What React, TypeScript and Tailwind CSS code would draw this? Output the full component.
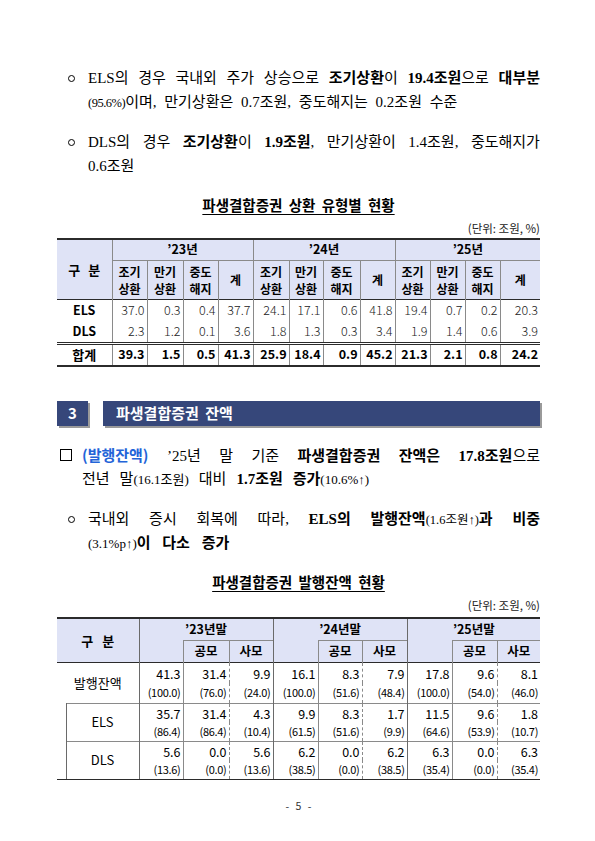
import clsx from "clsx";

const serif = "font-['Liberation_Serif','Noto_Sans_CJK_KR',serif]";
const sans = "font-['Noto_Sans_CJK_KR','Liberation_Sans',sans-serif]";

const t1Body = [
  { name: "ELS", vals: ["37.0", "0.3", "0.4", "37.7", "24.1", "17.1", "0.6", "41.8", "19.4", "0.7", "0.2", "20.3"] },
  { name: "DLS", vals: ["2.3", "1.2", "0.1", "3.6", "1.8", "1.3", "0.3", "3.4", "1.9", "1.4", "0.6", "3.9"] },
];
const t1Total = ["39.3", "1.5", "0.5", "41.3", "25.9", "18.4", "0.9", "45.2", "21.3", "2.1", "0.8", "24.2"];
const t1Cols = [
  "w-[55px]",
  "w-[35px]", "w-[36px]", "w-[35px]", "w-[35px]",
  "w-[36px]", "w-[34px]", "w-[37px]", "w-[35px]",
  "w-[35px]", "w-[35px]", "w-[35px]", "w-[40px]",
];
const subHeads = [["조기", "상환"], ["만기", "상환"], ["중도", "해지"], ["계"]];

const t2Rows = [
  {
    name: "발행잔액",
    vals: ["41.3", "31.4", "9.9", "16.1", "8.3", "7.9", "17.8", "9.6", "8.1"],
    pcts: ["(100.0)", "(76.0)", "(24.0)", "(100.0)", "(51.6)", "(48.4)", "(100.0)", "(54.0)", "(46.0)"],
  },
  {
    name: "ELS",
    vals: ["35.7", "31.4", "4.3", "9.9", "8.3", "1.7", "11.5", "9.6", "1.8"],
    pcts: ["(86.4)", "(86.4)", "(10.4)", "(61.5)", "(51.6)", "(9.9)", "(64.6)", "(53.9)", "(10.7)"],
  },
  {
    name: "DLS",
    vals: ["5.6", "0.0", "5.6", "6.2", "0.0", "6.2", "6.3", "0.0", "6.3"],
    pcts: ["(13.6)", "(0.0)", "(13.6)", "(38.5)", "(0.0)", "(38.5)", "(35.4)", "(0.0)", "(35.4)"],
  },
];
const t2Cols = [
  "w-[9px]", "w-[73px]",
  "w-[44px]", "w-[46px]", "w-[44px]",
  "w-[45px]", "w-[44px]", "w-[45px]",
  "w-[45px]", "w-[45px]", "w-[43px]",
];
// right border of each data column in table 2
const t2Right = [
  "border-r border-r-[#8a8a8a]",
  "border-r border-r-[#8a8a8a] [border-right-style:dashed]",
  "border-r border-r-[#6a6a6a]",
  "border-r border-r-[#8a8a8a]",
  "border-r border-r-[#8a8a8a] [border-right-style:dashed]",
  "border-r border-r-[#6a6a6a]",
  "border-r border-r-[#8a8a8a]",
  "border-r border-r-[#8a8a8a] [border-right-style:dashed]",
  "",
];

function Circle() {
  return (
    <div className="w-[31px] shrink-0 flex items-center">
      <span className="ml-[11px] inline-block w-[7px] h-[7px] rounded-full border border-black" />
    </div>
  );
}

function JLine({ children, className }: { children: React.ReactNode; className?: string }) {
  return <div className={clsx("flex-1 flex justify-between items-baseline", className)}>{children}</div>;
}

function Word({ children }: { children: React.ReactNode }) {
  return <span className="leading-6 whitespace-nowrap">{children}</span>;
}

function SectionHeader() {
  return (
    <div className="flex h-[25px]">
      <div className={clsx(sans, "w-[31px] bg-[#36477a] shadow-[2px_2px_0_#9a9a9a] text-white font-bold text-[15px] flex items-center justify-center")}>
        3
      </div>
      <div className={clsx(sans, "flex-1 ml-[15px] bg-[#36477a] shadow-[2px_2px_0_#9a9a9a] text-white font-bold text-[15px] flex items-center pl-[13px] [word-spacing:3px]")}>
        파생결합증권 잔액
      </div>
    </div>
  );
}

function Table1() {
  const hd = "bg-[#dfe3f6] font-bold p-0";
  return (
    <table className={clsx(sans, "w-[483px] table-fixed border-collapse text-black")}>
      <colgroup>
        {t1Cols.map((c, i) => (
          <col key={i} className={c} />
        ))}
      </colgroup>
      <thead>
        <tr className="h-[21px]">
          <th rowSpan={2} className={clsx(hd, "border-t-2 border-t-[#2b2b2b] border-r border-r-[#8a8a8a] text-[13px] [word-spacing:5px]")}>
            구 분
          </th>
          {["’23년", "’24년", "’25년"].map((y, i) => (
            <th
              key={y}
              colSpan={4}
              className={clsx(hd, "border-t-2 border-t-[#2b2b2b] border-b border-b-[#8a8a8a] text-[12.5px]", i < 2 && "border-r border-r-[#8a8a8a]")}
            >
              {y}
            </th>
          ))}
        </tr>
        <tr className="h-[39px]">
          {[0, 1, 2].flatMap((g) =>
            subHeads.map((s, j) => (
              <th
                key={`${g}-${j}`}
                className={clsx(hd, "text-[12px] leading-[17px]", !(g === 2 && j === 3) && "border-r border-r-[#8a8a8a]")}
              >
                {s.map((l) => (
                  <div key={l} className="leading-[17px]">{l}</div>
                ))}
              </th>
            ))
          )}
        </tr>
      </thead>
      <tbody>
        {t1Body.map((r, ri) => (
          <tr key={r.name} className="h-[22px]">
            <td className={clsx("p-0 text-center font-bold text-[12.5px] border-r border-r-[#8a8a8a]", ri === 0 && "border-t border-t-[#2b2b2b]")}>
              {r.name}
            </td>
            {r.vals.map((v, i) => (
              <td
                key={i}
                className={clsx("p-0 pr-[2px] text-right text-[12.5px] font-light text-[#222]", i < 11 && "border-r border-r-[#8a8a8a]", ri === 0 && "border-t border-t-[#2b2b2b]")}
              >
                {v}
              </td>
            ))}
          </tr>
        ))}
        <tr className="h-[23px]">
          <td className="p-0 text-center font-bold text-[13px] border-r border-r-[#8a8a8a] border-t-[3px] [border-top-style:double] border-t-[#2b2b2b] border-b-2 border-b-[#2b2b2b]">
            합계
          </td>
          {t1Total.map((v, i) => (
            <td
              key={i}
              className={clsx(
                "p-0 pr-[2px] text-right text-[12.5px] font-bold border-t-[3px] [border-top-style:double] border-t-[#2b2b2b] border-b-2 border-b-[#2b2b2b]",
                i < 11 && "border-r border-r-[#8a8a8a]"
              )}
            >
              {v}
            </td>
          ))}
        </tr>
      </tbody>
    </table>
  );
}

function Table2() {
  const hd = "bg-[#dfe3f6] font-bold p-0";
  return (
    <table className={clsx(sans, "w-[483px] table-fixed border-collapse text-black")}>
      <colgroup>
        {t2Cols.map((c, i) => (
          <col key={i} className={c} />
        ))}
      </colgroup>
      <thead>
        <tr className="h-[22px]">
          <th colSpan={2} rowSpan={2} className={clsx(hd, "border-t-2 border-t-[#2b2b2b] border-r border-r-[#6a6a6a] text-[13px] [word-spacing:6px]")}>
            구 분
          </th>
          {["’23년말", "’24년말", "’25년말"].map((y, i) => (
            <th key={y} colSpan={3} className={clsx(hd, "border-t-2 border-t-[#2b2b2b] text-[12.5px]", i < 2 && "border-r border-r-[#6a6a6a]")}>
              {y}
            </th>
          ))}
        </tr>
        <tr className="h-[22px]">
          {[0, 1, 2].flatMap((g) => [
            <th key={`${g}a`} className={clsx(hd, "border-r border-r-[#8a8a8a]")} />,
            <th key={`${g}b`} className={clsx(hd, "text-[12.5px] border-t border-t-[#8a8a8a] border-r border-r-[#8a8a8a]")}>
              공모
            </th>,
            <th key={`${g}c`} className={clsx(hd, "text-[12.5px] border-t border-t-[#8a8a8a]", g < 2 && "border-r border-r-[#6a6a6a]")}>
              사모
            </th>,
          ])}
        </tr>
      </thead>
      <tbody>
        {t2Rows.map((r, ri) => {
          const top = ri === 0 ? "border-t border-t-[#2b2b2b]" : "border-t border-t-[#8a8a8a]";
          const bottom = ri === 2 ? "border-b border-b-[#2b2b2b]" : "";
          const h1 = ri === 0 ? "h-[21px]" : "h-[19px]";
          const h2 = ri === 0 ? "h-[20px]" : "h-[19px]";
          return [
            <tr key={`${r.name}v`} className={h1}>
              {ri === 1 && <td rowSpan={4} className="p-0 border-r border-r-[#6a6a6a] border-b border-b-[#2b2b2b]" />}
              <td
                colSpan={ri === 0 ? 2 : 1}
                rowSpan={2}
                className={clsx("p-0 text-center text-[13px] border-r border-r-[#6a6a6a]", top, bottom)}
              >
                {r.name}
              </td>
              {r.vals.map((v, i) => (
                <td key={i} className={clsx("p-0 pr-[2px] text-right text-[12.5px] leading-none pt-[2px]", t2Right[i], top)}>
                  {v}
                </td>
              ))}
            </tr>,
            <tr key={`${r.name}p`} className={h2}>
              {r.pcts.map((v, i) => (
                <td key={i} className={clsx("p-0 pr-[2px] text-right text-[11px] leading-none tracking-[-0.3px]", t2Right[i], bottom)}>
                  {v}
                </td>
              ))}
            </tr>,
          ];
        })}
      </tbody>
    </table>
  );
}

export default function App() {
  return (
    <div className="w-[595px] h-[841px] bg-white overflow-hidden">
      <div className={clsx(serif, "ml-[57px] w-[483px] pt-[66px] text-[15px] text-black")}>
        {/* bullet 1 */}
        <div className="flex h-6">
          <Circle />
          <JLine>
            <Word>ELS의</Word>
            <Word>경우</Word>
            <Word>국내외</Word>
            <Word>주가</Word>
            <Word>상승으로</Word>
            <Word>
              <b>조기상환</b>이
            </Word>
            <Word>
              <b>19.4조원</b>으로
            </Word>
            <Word>
              <b>대부분</b>
            </Word>
          </JLine>
        </div>
        <div className="flex h-6">
          <div className="w-[31px] shrink-0" />
          <div className="leading-6 [word-spacing:4px]">
            <span className="text-[12.5px] tracking-[-0.5px]">(95.6%)</span>이며, 만기상환은 0.7조원, 중도해지는 0.2조원 수준
          </div>
        </div>

        {/* bullet 2 */}
        <div className="flex h-6 mt-4">
          <Circle />
          <JLine>
            <Word>DLS의</Word>
            <Word>경우</Word>
            <Word>
              <b>조기상환</b>이
            </Word>
            <Word>
              <b>1.9조원</b>,
            </Word>
            <Word>만기상환이</Word>
            <Word>1.4조원,</Word>
            <Word>중도해지가</Word>
          </JLine>
        </div>
        <div className="flex h-6">
          <div className="w-[31px] shrink-0" />
          <div className="leading-6">0.6조원</div>
        </div>

        {/* table 1 */}
        <div className={clsx(sans, "mt-[17px] h-5 text-center text-[14.5px] font-bold underline underline-offset-[3px] leading-5 [word-spacing:3px]")}>
          파생결합증권 상환 유형별 현황
        </div>
        <div className={clsx(sans, "mt-[5px] h-4 text-right text-[11.5px] leading-4 text-[#222]")}>(단위: 조원, %)</div>
        <div className="mt-[2px]">
          <Table1 />
        </div>

        {/* section 3 */}
        <div className="mt-[34px]">
          <SectionHeader />
        </div>

        <div className="flex h-6 mt-[17px]">
          <div className="w-[25px] shrink-0 flex items-center">
            <span className="ml-[3px] inline-block w-[12px] h-[12px] border border-black" />
          </div>
          <JLine>
            <Word>
              <span className={clsx(sans, "font-bold text-[#2364d8]")}>(발행잔액)</span>
            </Word>
            <Word>’25년</Word>
            <Word>말</Word>
            <Word>기준</Word>
            <Word>
              <b>파생결합증권</b>
            </Word>
            <Word>
              <b>잔액은</b>
            </Word>
            <Word>
              <b>17.8조원</b>으로
            </Word>
          </JLine>
        </div>
        <div className="flex h-6">
          <div className="w-[25px] shrink-0" />
          <div className="flex items-baseline gap-[10px]">
            <Word>전년</Word>
            <Word>
              말<span className="text-[13px]">(16.1조원)</span>
            </Word>
            <Word>대비</Word>
            <Word>
              <b>1.7조원</b>
            </Word>
            <Word>
              <b>증가</b>
              <span className="text-[13px]">(10.6%↑)</span>
            </Word>
          </div>
        </div>

        <div className="flex h-6 mt-4">
          <Circle />
          <JLine>
            <Word>국내외</Word>
            <Word>증시</Word>
            <Word>회복에</Word>
            <Word>따라,</Word>
            <Word>
              <b>ELS의</b>
            </Word>
            <Word>
              <b>발행잔액</b>
              <span className="text-[12.5px]">(1.6조원↑)</span>
              <b>과</b>
            </Word>
            <Word>
              <b>비중</b>
            </Word>
          </JLine>
        </div>
        <div className="flex h-6">
          <div className="w-[31px] shrink-0" />
          <div className="leading-6 [word-spacing:8px]">
            <span className="text-[13px]">(3.1%p↑)</span>
            <b>이 다소 증가</b>
          </div>
        </div>

        {/* table 2 */}
        <div className={clsx(sans, "mt-[17px] h-5 text-center text-[14.5px] font-bold underline underline-offset-[3px] leading-5 [word-spacing:3px]")}>
          파생결합증권 발행잔액 현황
        </div>
        <div className={clsx(sans, "mt-[5px] h-4 text-right text-[11.5px] leading-4 text-[#222]")}>(단위: 조원, %)</div>
        <div className="mt-[4px]">
          <Table2 />
        </div>

        <div className={clsx(sans, "mt-[18px] h-4 text-center text-[10.5px] leading-4 text-[#333] [word-spacing:4px]")}>- 5 -</div>
      </div>
    </div>
  );
}
